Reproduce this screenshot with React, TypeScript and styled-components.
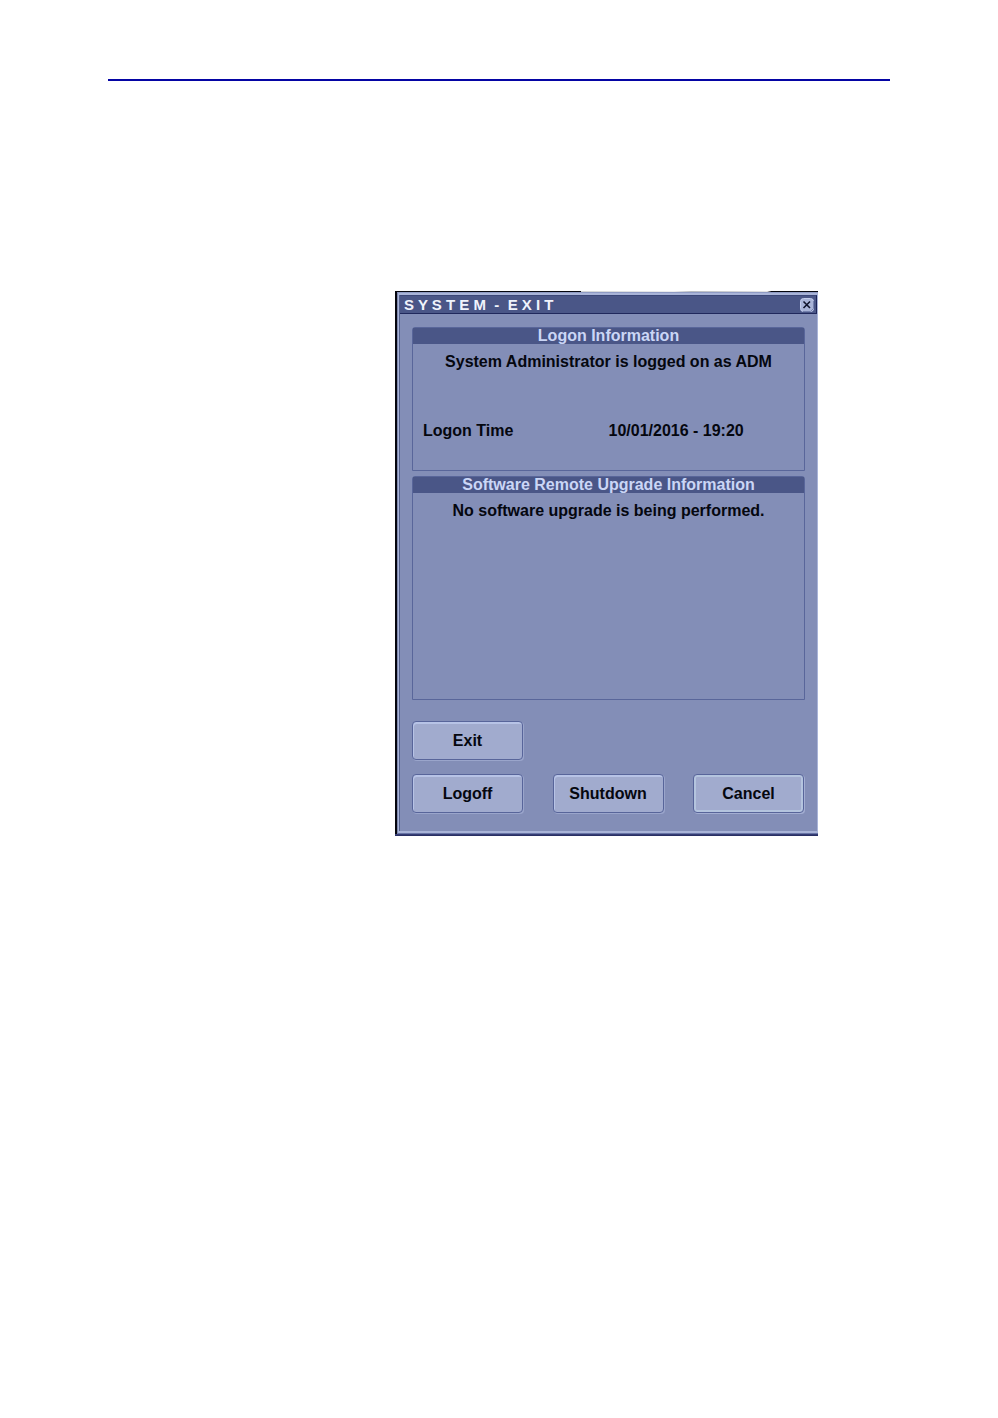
import styled, { createGlobalStyle } from "styled-components";

const GlobalStyle = createGlobalStyle`
    * {
        box-sizing: border-box;
    }
    body {
        margin: 0;
        background-color: #ffffff;
        font-family: "Liberation Sans", Arial, sans-serif;
    }
`;

const Page = styled.main`
    padding: 79px 108px 0;
`;

const Rule = styled.hr`
    height: 2px;
    margin: 0;
    border: none;
    background-color: #0404a4;
`;

const Figure = styled.div`
    display: grid;
    grid-template-columns: minmax(0, 1fr);
    padding: 210px 72px 0 287px;
`;

//the strip along the top edge is the bright window behind the dialog
const Frame = styled.section`
    padding: 1px 0 2px 2px;
    background: linear-gradient(90deg, #05060e 44%, #d4d6d6 44%, #eeeeee 66%, #b9bcc0 70%, #e4e4e4 88%, #05060e 89%) top / 100% 1px no-repeat,
        linear-gradient(#3b437c, #23295c) bottom / 100% 2px no-repeat,
        #05060e;
`;

const Bevel = styled.div`
    padding: 2px 1px 2px 1px;
    background-color: #a9b4d8;
    border-top: 1px solid #8f9bc4;
    border-left: 1px solid #7c86ac;
    border-bottom: 1px solid #6874a6;
`;

const Inner = styled.div`
    border-left: 1px solid #55628f;
    background-color: #838eb7;
`;

const TitleBar = styled.header`
    display: flex;
    justify-content: space-between;
    align-items: center;
    height: 19px;
    padding: 0 2px 0 4px;
    border-top: 1px solid #3b4778;
    border-right: 1px solid #1b2356;
    border-bottom: 1px solid #20285c;
    background-color: #4a5687;
`;

const Title = styled.h1`
    margin: 0;
    font-size: 15px;
    line-height: 17px;
    color: #f0f3fc;
    white-space: pre;
`;

const CloseButton = styled.button`
    display: flex;
    width: 14px;
    height: 14px;
    padding: 0;
    border: none;
    background: none;
`;

const Content = styled.div`
    padding: 13px 12px 18px;
`;

const Panel = styled.section<{ $height: number }>`
    min-height: ${(props) => props.$height}px;
    margin-bottom: 5px;
    border: 1px solid #59669a;
    border-radius: 3px 3px 0 0;
`;

const PanelTitle = styled.h2`
    margin: 0;
    font-size: 16px;
    line-height: 16px;
    text-align: center;
    color: #cbd6f6;
    background-color: #4a5687;
`;

const Message = styled.p`
    margin: 8px 0 0;
    font-size: 16px;
    line-height: 20px;
    font-weight: bold;
    text-align: center;
    color: #05070f;
`;

const LogonRow = styled.dl`
    display: grid;
    grid-template-columns: 1fr 1fr;
    margin: 49px 0 0;
    padding: 0 10px;
    font-size: 16px;
    line-height: 20px;
    font-weight: bold;
    color: #05070f;
    dd {
        margin: 0;
    }
`;

const Actions = styled.div`
    display: grid;
    grid-template-columns: repeat(3, 111px);
    justify-content: space-between;
    row-gap: 14px;
    padding: 16px 1px 0 0;
`;

const ActionButton = styled.button<{ $focused?: boolean }>`
    height: 39px;
    padding: 0;
    border: 1px solid #58659a;
    border-radius: 4px;
    background-color: #a1abce;
    box-shadow: ${(props) =>
        props.$focused
            ? "inset 0 0 0 2px #b4c4de, 1px 1px 0 #a3aed2"
            : "inset 1px 2px 0 #b7c3e6, 1px 1px 0 #9aa5cb"};
    font-family: inherit;
    font-size: 16px;
    font-weight: bold;
    color: #05070f;
    &:nth-child(2) {
        grid-column: 1;
    }
`;

function App() {
    return (
        <>
            <GlobalStyle />
            <Page>
                <Rule />
                <Figure>
                    <Frame>
                        <Bevel>
                            <Inner>
                                <TitleBar>
                                    <Title>{"S Y S T E M  -  E X I T"}</Title>
                                    <CloseButton aria-label="Close">
                                        <svg width="14" height="14" viewBox="0 0 14 14">
                                            <rect x="0.5" y="0.5" width="13" height="13" rx="3" fill="#a9b4d8" stroke="#c3cdec" />
                                            <path d="M13.5 3v7.500l-3 3H3" fill="none" stroke="#7480ad" />
                                            <path d="M3.500 3.500l6.500 6.500M10 3.500l-6.500 6.500" stroke="#10142c" strokeWidth="1.600" />
                                        </svg>
                                    </CloseButton>
                                </TitleBar>
                                <Content>
                                    <Panel $height={144}>
                                        <PanelTitle>Logon Information</PanelTitle>
                                        <Message>System Administrator is logged on as ADM</Message>
                                        <LogonRow>
                                            <dt>Logon Time</dt>
                                            <dd>10/01/2016 - 19:20</dd>
                                        </LogonRow>
                                    </Panel>
                                    <Panel $height={224}>
                                        <PanelTitle>Software Remote Upgrade Information</PanelTitle>
                                        <Message>No software upgrade is being performed.</Message>
                                    </Panel>
                                    <Actions>
                                        <ActionButton>Exit</ActionButton>
                                        <ActionButton>Logoff</ActionButton>
                                        <ActionButton>Shutdown</ActionButton>
                                        <ActionButton $focused>Cancel</ActionButton>
                                    </Actions>
                                </Content>
                            </Inner>
                        </Bevel>
                    </Frame>
                </Figure>
            </Page>
        </>
    );
}

export default App;
